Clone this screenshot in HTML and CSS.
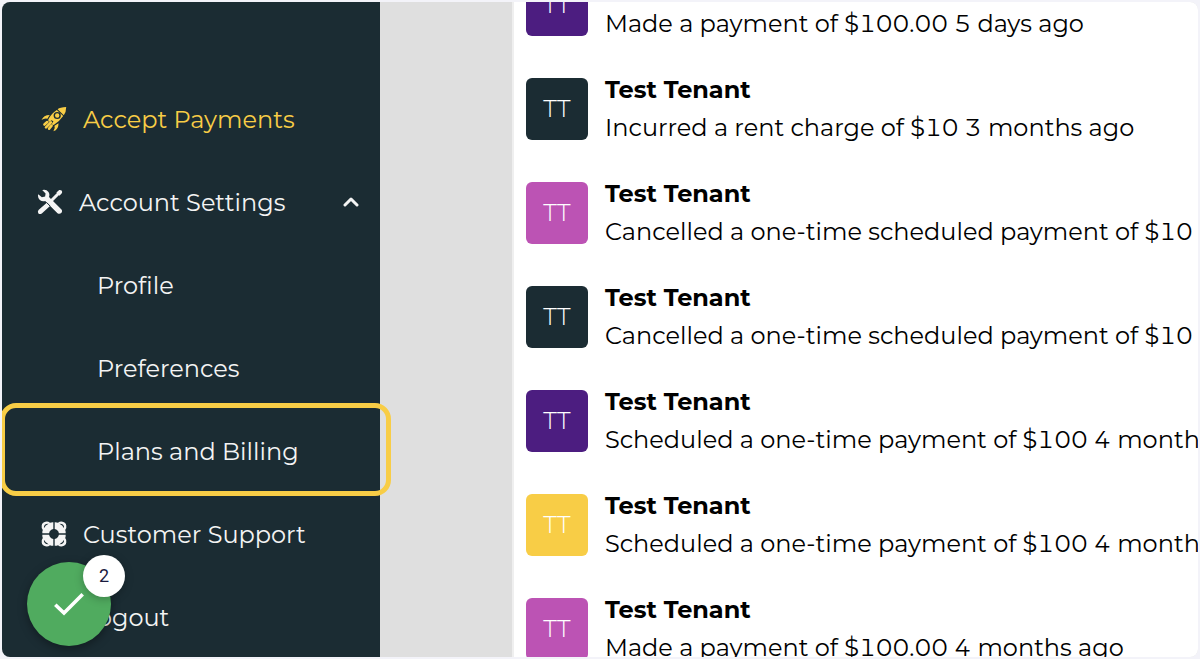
FILE: index.html
```html
<!DOCTYPE html>
<html lang="en">
<head>
<meta charset="utf-8">
<meta name="viewport" content="width=device-width, initial-scale=1">
<title>Activity</title>
<link rel="stylesheet" href="styles.css">
</head>
<body>
<div class="frame">
  <nav class="sidebar" aria-label="Main">
    <a class="item accent" href="#">
      <svg class="icon" viewBox="0 0 26 26" aria-hidden="true">
        <path fill="currentColor" fill-rule="evenodd" d="M16.6 3.2Q19 1 25.2.9 25.2 6 22.8 9.3ZM15.8 3.9 22.2 10.1Q18.5 15.6 12.7 18.9L10.6 18.4 12.4 15.3 10.5 14.3 7.7 16.2 7.2 13.8Q10.2 7.3 15.8 3.9ZM16.2 5.9A3.6 3.6 0 1 0 16.2 13.1 3.6 3.6 0 0 0 16.2 5.9ZM16.2 7.3A2.2 2.2 0 1 1 16.2 11.7 2.2 2.2 0 0 1 16.2 7.3Z"/>
        <path fill="currentColor" d="M8.7 8.9 6.4 12.7Q3 12 .5 14.1 2.5 9 8.7 8.9ZM17.5 17.2 13.5 19.7Q14.6 22.4 12.4 25.3 17.7 23.6 17.5 17.2Z"/>
        <path stroke="currentColor" stroke-width="2.6" stroke-linecap="round" d="M6.2 16.1 3.4 18.5M9.9 16.4 5 21.3M10.6 19.7 8.1 22.7"/>
      </svg>
      <span>Accept Payments</span>
    </a>
    <button class="item group" type="button" aria-expanded="true">
      <svg class="icon" viewBox="0 0 26 26" aria-hidden="true">
        <path stroke="currentColor" stroke-width="3" stroke-linecap="round" d="M15 11 21.5 4.5"/>
        <path fill="currentColor" d="M19.4 3.6 22.2 1Q23.5.6 24.6 1.6 25.5 2.8 25 4L22.5 6.7ZM9.8 13.7 13 17 4.8 24.5Q2.9 25.7 1.4 24.4.3 22.7 1.5 21Z"/>
        <path fill="currentColor" d="M5.2 1.1Q9-.1 11.5 2.9 13 5.2 12 8L24.5 20.4Q25.7 22.2 24.3 24.1 22.5 25.5 20.5 24.3L8.2 12Q5.1 12.8 2.8 10.9.4 8.9 1.2 5.3L4.9 8.2 8.1 7.6 8.6 4.6Z"/>
        <path stroke="#1b2c33" stroke-width="1" d="M9.5 13.4 13.2 17.1"/>
      </svg>
      <span>Account Settings</span>
      <svg class="chevron" viewBox="0 0 16 10" aria-hidden="true">
        <path fill="none" stroke="currentColor" stroke-width="3" stroke-linecap="round" stroke-linejoin="round" d="M2 8 8 2 14 8"/>
      </svg>
    </button>
    <a class="item sub" href="#">Profile</a>
    <a class="item sub" href="#">Preferences</a>
    <a class="item sub marked" href="#">Plans and Billing</a>
    <a class="item" href="#">
      <svg class="icon" viewBox="0 0 26 26" aria-hidden="true">
        <g fill="currentColor">
          <path id="quarter" d="M12.3 1.3V8.1Q8.8 8.8 8.1 12.3H1.3Q1.2 10.5 1.8 9 .2 7 .7 4.5 1.2 1.2 4.5.7 7 .2 9 1.8 10.5 1.2 12.3 1.3Z"/>
          <use href="#quarter" transform="rotate(90 13 13)"/>
          <use href="#quarter" transform="rotate(180 13 13)"/>
          <use href="#quarter" transform="rotate(270 13 13)"/>
        </g>
        <path fill="#1b2c33" d="M2.9 7.2Q2.6 2.6 7.6 2.8 4.5 4 2.9 7.2ZM23.1 7.2Q23.4 2.6 18.4 2.8 21.5 4 23.1 7.2ZM2.9 18.8Q2.6 23.4 7.6 23.2 4.5 22 2.9 18.8ZM23.1 18.8Q23.4 23.4 18.4 23.2 21.5 22 23.1 18.8Z"/>
      </svg>
      <span>Customer Support</span>
    </a>
    <a class="item" href="#"><span class="icon"></span><span>Logout</span></a>
    <button class="tasks" type="button" aria-label="Completed tasks">
      <svg class="check" viewBox="0 0 30 24" aria-hidden="true">
        <path fill="none" stroke="currentColor" stroke-width="3.6" d="M1.3 12.7 10 21 28.7 2.2"/>
      </svg>
      <span class="count">2</span>
    </button>
  </nav>
  <main class="content">
    <ul class="feed">
      <li class="entry"><span class="avatar purple">TT</span><div class="text"><strong class="name">Test Tenant</strong><p class="detail">Made a payment of $100.00 5 days ago</p></div></li>
      <li class="entry"><span class="avatar dark">TT</span><div class="text"><strong class="name">Test Tenant</strong><p class="detail">Incurred a rent charge of $10 3 months ago</p></div></li>
      <li class="entry"><span class="avatar pink">TT</span><div class="text"><strong class="name">Test Tenant</strong><p class="detail">Cancelled a one-time scheduled payment of $10</p></div></li>
      <li class="entry"><span class="avatar dark">TT</span><div class="text"><strong class="name">Test Tenant</strong><p class="detail">Cancelled a one-time scheduled payment of $10</p></div></li>
      <li class="entry"><span class="avatar purple">TT</span><div class="text"><strong class="name">Test Tenant</strong><p class="detail">Scheduled a one-time payment of $100 4 months ago</p></div></li>
      <li class="entry"><span class="avatar yellow">TT</span><div class="text"><strong class="name">Test Tenant</strong><p class="detail">Scheduled a one-time payment of $100 4 months ago</p></div></li>
      <li class="entry"><span class="avatar pink">TT</span><div class="text"><strong class="name">Test Tenant</strong><p class="detail">Made a payment of $100.00 4 months ago</p></div></li>
    </ul>
  </main>
</div>
</body>
</html>
```
FILE: styles.css
```css
* { box-sizing: border-box; }
body {
  margin: 0;
  padding: 2px;
  height: 100vh;
  background: #f3f3f9;
  font-family: Montserrat, Inter, "Liberation Sans", sans-serif;
  font-size: 24px;
  color: #000;
}
.frame {
  display: flex;
  height: 100%;
  overflow: hidden;
  border-radius: 8px;
  background: #dfdfdf;
}
.sidebar {
  position: relative;
  z-index: 1;
  flex: 0 0 378px;
  padding-top: 75px;
  background: #1b2c33;
}
.item {
  position: relative;
  display: flex;
  align-items: center;
  gap: 16px;
  width: 100%;
  height: 83px;
  padding: 1px 21px 0 39px;
  border: 0;
  background: none;
  color: #f4f4f4;
  font: inherit;
  text-decoration: none;
  white-space: nowrap;
}
.accent { color: #f8cd46; }
.group { padding-left: 35px; }
.sub { padding-left: 95px; }
.icon { flex: none; width: 26px; height: 26px; }
.chevron { width: 16px; height: 10px; margin-left: auto; }
.marked::after {
  content: "";
  position: absolute;
  inset: -6px -11px -4px -2px;
  border: 5px solid #f8cd46;
  border-radius: 16px;
}
.tasks {
  position: absolute;
  left: 25px;
  bottom: 11px;
  display: grid;
  place-items: center;
  width: 84px;
  height: 84px;
  padding: 0;
  border: 0;
  border-radius: 50%;
  background: #50ab5f;
  color: #fff;
  box-shadow: 0 3px 10px rgba(0, 0, 0, .35);
}
.check { width: 30px; height: 24px; }
.count {
  position: absolute;
  top: -7px;
  right: -14px;
  width: 42px;
  height: 42px;
  border-radius: 50%;
  background: #fff;
  color: #1b1b3f;
  font: 18px/42px Roboto, sans-serif;
  text-align: center;
  box-shadow: 0 2px 8px rgba(0, 0, 0, .25);
}
.content {
  flex: 1;
  min-width: 0;
  margin-left: 132px;
  border-left: 2px solid #efefef;
  background: #fff;
  overflow: hidden;
}
.feed {
  margin: -35px 0 0;
  padding: 0 0 0 12px;
  list-style: none;
}
.entry {
  display: flex;
  gap: 17px;
  height: 104px;
}
.avatar {
  flex: none;
  width: 62px;
  height: 62px;
  margin-top: 7px;
  border-radius: 6px;
  color: #fff;
  font-weight: 300;
  line-height: 62px;
  text-align: center;
}
.purple { background: #4c1d80; }
.dark { background: #1b2c33; }
.pink { background: #bc53b4; }
.yellow { background: #f8cd46; }
.text { min-width: 0; line-height: 38px; white-space: nowrap; }
.name { display: block; font-weight: 700; }
.detail { margin: 0; font-variant-numeric: tabular-nums; }
```
